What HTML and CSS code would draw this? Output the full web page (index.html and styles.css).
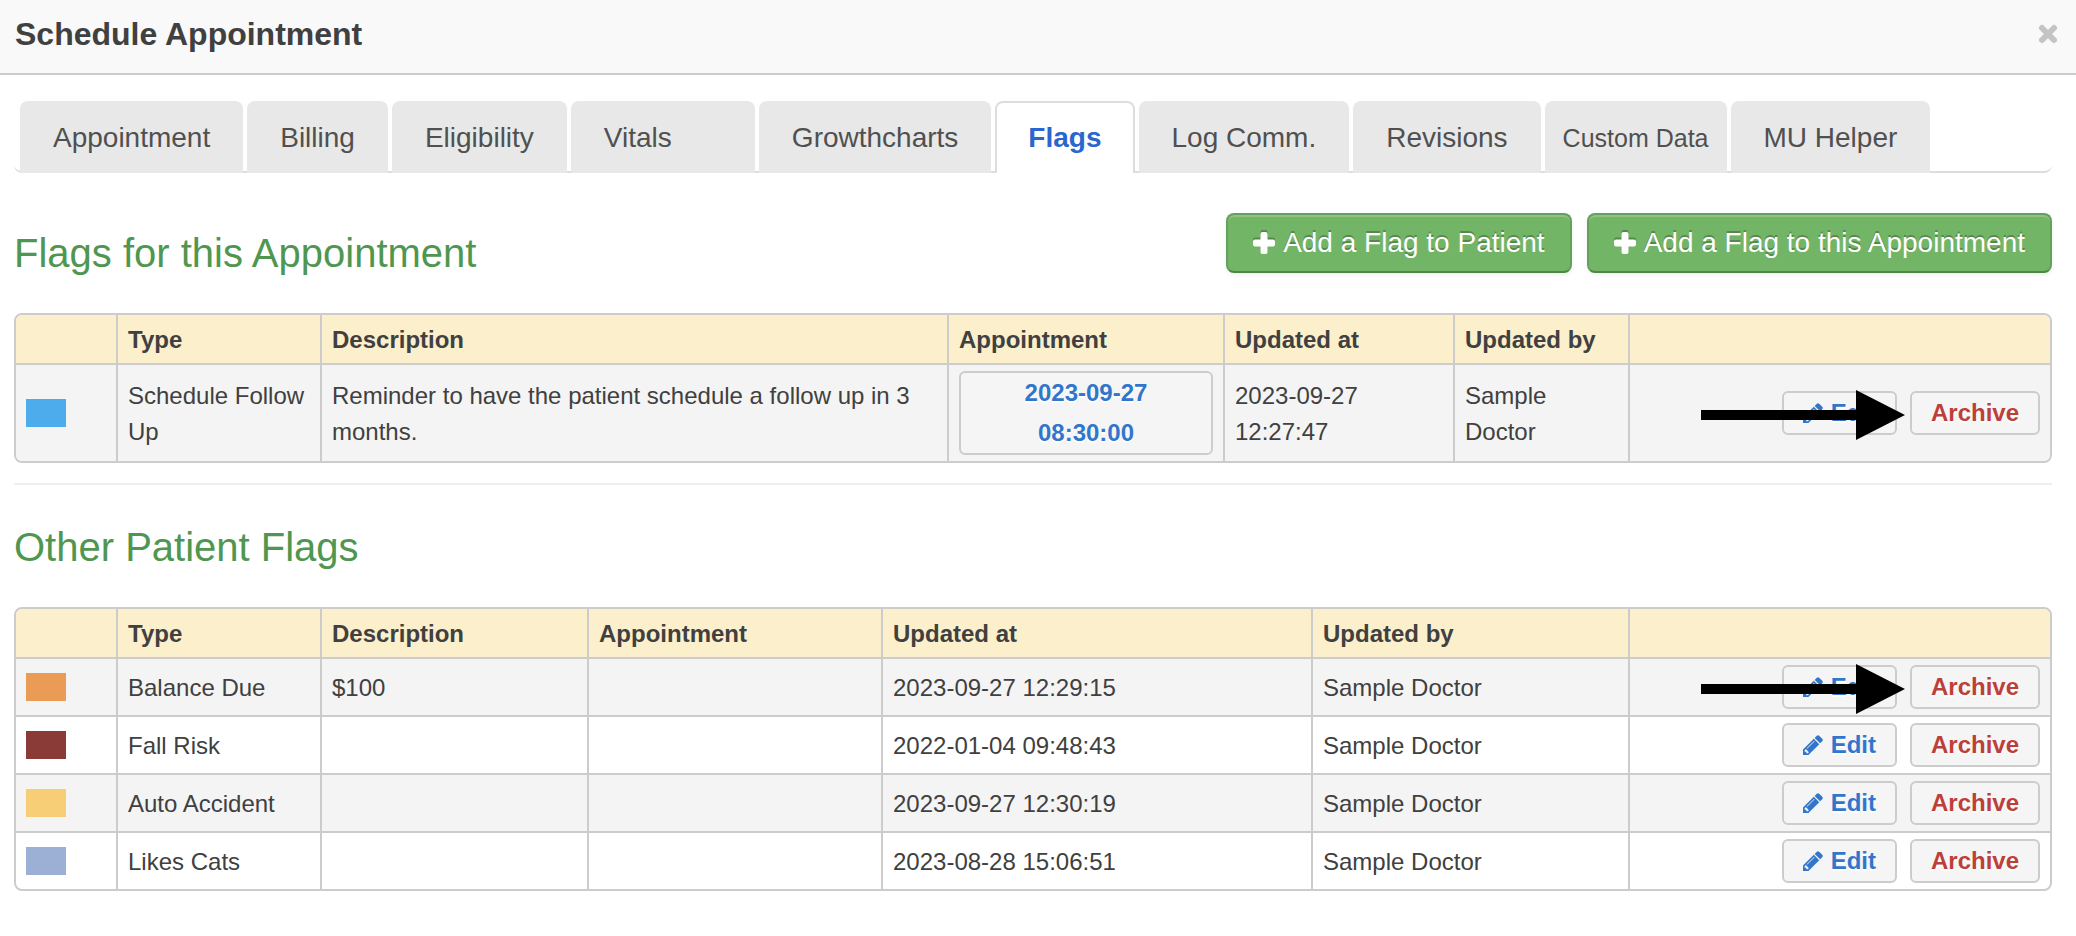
FILE: index.html
```html
<!DOCTYPE html>
<html lang="en">
<head>
<meta charset="utf-8">
<title>Schedule Appointment</title>
<link rel="stylesheet" href="styles.css">
</head>
<body>
<svg class="sprite" aria-hidden="true">
  <symbol id="plus" viewBox="0 0 22 22"><path d="M9.500 0h3a2 2 0 0 1 2 2v5.500h5.500a2 2 0 0 1 2 2v3a2 2 0 0 1-2 2h-5.500v5.500a2 2 0 0 1-2 2h-3a2 2 0 0 1-2-2v-5.500h-5.500a2 2 0 0 1-2-2v-3a2 2 0 0 1 2-2h5.500v-5.500a2 2 0 0 1 2-2z"/></symbol>
  <symbol id="pencil" viewBox="0 0 1536 1536"><path d="M363 1408l91-91-235-235-91 91v107h128v128h107zM886 480q0-22-22-22-10 0-17 7l-542 542q-7 7-7 17 0 22 22 22 10 0 17-7l542-542q7-7 7-17zM832 288l416 416-832 832H0v-416zM1515 384q0 53-37 90l-166 166-416-416 166-165q36-38 90-38 53 0 91 38l235 234q37 39 37 91z"/></symbol>
  <symbol id="arrow" viewBox="0 0 204 50"><path d="M0 20h155V0l49 25-49 25V30H0z"/></symbol>
</svg>

<header class="modal-header">
  <h1>Schedule Appointment</h1>
  <button class="close" type="button" aria-label="Close">
    <svg viewBox="0 0 20 20"><path d="M4 4l12 12M16 4l-12 12"/></svg>
  </button>
</header>

<nav class="tabs">
  <a class="tab" href="#appointment">Appointment</a>
  <a class="tab" href="#billing">Billing</a>
  <a class="tab" href="#eligibility">Eligibility</a>
  <a class="tab tab-vitals" href="#vitals">Vitals</a>
  <a class="tab" href="#growthcharts">Growthcharts</a>
  <a class="tab tab-active" href="#flags">Flags</a>
  <a class="tab" href="#log">Log Comm.</a>
  <a class="tab" href="#revisions">Revisions</a>
  <a class="tab tab-small" href="#custom">Custom Data</a>
  <a class="tab" href="#helper">MU Helper</a>
</nav>

<main>
  <section>
    <div class="section-head">
      <h2>Flags for this Appointment</h2>
      <div class="section-actions">
        <button class="btn-add" type="button"><svg class="plus"><use href="#plus"/></svg>Add a Flag to Patient</button>
        <button class="btn-add" type="button"><svg class="plus"><use href="#plus"/></svg>Add a Flag to this Appointment</button>
      </div>
    </div>
    <table class="flags">
      <colgroup><col class="w-swatch"><col class="w-type"><col><col class="w-appt"><col class="w-at"><col class="w-by"><col class="w-actions"></colgroup>
      <thead>
        <tr><th></th><th>Type</th><th>Description</th><th>Appointment</th><th>Updated at</th><th>Updated by</th><th></th></tr>
      </thead>
      <tbody>
        <tr>
          <td><span class="swatch blue"></span></td>
          <td>Schedule Follow Up</td>
          <td>Reminder to have the patient schedule a follow up in 3 months.</td>
          <td><button class="btn btn-date" type="button">2023-09-27<br>08:30:00</button></td>
          <td>2023-09-27<br>12:27:47</td>
          <td>Sample Doctor</td>
          <td><div class="actions"><button class="btn" type="button"><svg class="pencil"><use href="#pencil"/></svg>Edit</button><button class="btn btn-archive" type="button">Archive</button><svg class="arrow"><use href="#arrow"/></svg></div></td>
        </tr>
      </tbody>
    </table>
  </section>
  <hr>
  <section>
    <div class="section-head">
      <h2>Other Patient Flags</h2>
    </div>
    <table class="flags">
      <colgroup><col class="w-swatch"><col class="w-type"><col><col class="w-other-appt"><col class="w-other-at"><col class="w-other-by"><col class="w-actions"></colgroup>
      <thead>
        <tr><th></th><th>Type</th><th>Description</th><th>Appointment</th><th>Updated at</th><th>Updated by</th><th></th></tr>
      </thead>
      <tbody>
        <tr>
          <td><span class="swatch orange"></span></td><td>Balance Due</td><td>$100</td><td></td><td>2023-09-27 12:29:15</td><td>Sample Doctor</td>
          <td><div class="actions"><button class="btn" type="button"><svg class="pencil"><use href="#pencil"/></svg>Edit</button><button class="btn btn-archive" type="button">Archive</button><svg class="arrow"><use href="#arrow"/></svg></div></td>
        </tr>
        <tr>
          <td><span class="swatch maroon"></span></td><td>Fall Risk</td><td></td><td></td><td>2022-01-04 09:48:43</td><td>Sample Doctor</td>
          <td><div class="actions"><button class="btn" type="button"><svg class="pencil"><use href="#pencil"/></svg>Edit</button><button class="btn btn-archive" type="button">Archive</button></div></td>
        </tr>
        <tr>
          <td><span class="swatch yellow"></span></td><td>Auto Accident</td><td></td><td></td><td>2023-09-27 12:30:19</td><td>Sample Doctor</td>
          <td><div class="actions"><button class="btn" type="button"><svg class="pencil"><use href="#pencil"/></svg>Edit</button><button class="btn btn-archive" type="button">Archive</button></div></td>
        </tr>
        <tr>
          <td><span class="swatch slate"></span></td><td>Likes Cats</td><td></td><td></td><td>2023-08-28 15:06:51</td><td>Sample Doctor</td>
          <td><div class="actions"><button class="btn" type="button"><svg class="pencil"><use href="#pencil"/></svg>Edit</button><button class="btn btn-archive" type="button">Archive</button></div></td>
        </tr>
      </tbody>
    </table>
  </section>
</main>
</body>
</html>
```
FILE: styles.css
```css
* { box-sizing: border-box; }

body {
  margin: 0;
  background: #fff;
  color: #404040;
  font: 24px/36px "Liberation Sans", Arial, sans-serif;
}

button { font-family: inherit; cursor: pointer; }

.sprite { display: none; }

.modal-header {
  display: flex;
  align-items: center;
  justify-content: space-between;
  padding: 14px 18px 19px 15px;
  background: #f9f9f9;
  border-bottom: 2px solid #ccc;
}

h1 { margin: 0; font-size: 32px; line-height: 40px; }

.close {
  display: flex;
  padding: 0;
  border: 0;
  background: none;
}
.close svg {
  width: 20px;
  height: 20px;
  fill: none;
  stroke: #c4c4c4;
  stroke-width: 6;
  stroke-linecap: round;
}

.tabs {
  display: flex;
  gap: 4px;
  margin: 26px 24px 40px 14px;
  padding-left: 6px;
  border-bottom: 2px solid #ddd;
  border-radius: 0 0 8px 8px;
}
.tab {
  margin-bottom: -2px;
  padding: 17px 31px;
  border: 2px solid #e8e8e8;
  border-bottom: 0;
  border-radius: 8px 8px 0 0;
  background: #e8e8e8;
  color: #505050;
  font-size: 28px;
  line-height: 36px;
  text-decoration: none;
  white-space: nowrap;
}
.tab-vitals { min-width: 184px; }
.tab-small { padding: 17px 16px; font-size: 25px; }
.tab-active {
  border-color: #ddd;
  background: #fff;
  color: #2a66d0;
  font-weight: bold;
}

main { padding: 0 24px 0 14px; }

.section-head {
  display: flex;
  align-items: flex-start;
  justify-content: space-between;
  margin-bottom: 20px;
}
h2 {
  margin: 0;
  color: #4f9750;
  font-size: 40px;
  font-weight: normal;
  line-height: 80px;
}
.section-actions { display: flex; gap: 15px; }

.btn-add {
  display: flex;
  align-items: center;
  gap: 8px;
  height: 60px;
  padding: 0 25px;
  border: 2px solid #63a25a;
  border-bottom-color: #4f8747;
  border-radius: 8px;
  background: #73b566;
  box-shadow: inset 0 2px 0 rgba(255, 255, 255, .2), 0 2px 4px rgba(0, 0, 0, .06);
  color: #fff;
  font-size: 28px;
  text-shadow: 0 -2px 0 rgba(0, 0, 0, .25);
}
.plus {
  width: 22px;
  height: 22px;
  fill: #fff;
  filter: drop-shadow(0 -2px 0 rgba(0, 0, 0, .25));
}

.flags {
  width: 100%;
  table-layout: fixed;
  border: 2px solid #ccc;
  border-radius: 8px;
  border-spacing: 0;
  overflow: hidden;
}
.w-swatch { width: 100px; }
.w-type { width: 204px; }
.w-appt { width: 276px; }
.w-at { width: 230px; }
.w-by { width: 175px; }
.w-actions { width: 422px; }
.w-other-appt { width: 294px; }
.w-other-at { width: 430px; }
.w-other-by { width: 317px; }

.flags th {
  padding: 7px 10px 5px;
  border-left: 2px solid #ccc;
  background: #fcefcc;
  text-align: left;
}
.flags td {
  padding: 7px 10px 5px;
  border-top: 2px solid #ccc;
  border-left: 2px solid #ccc;
  vertical-align: middle;
}
.flags td:first-child, .flags td:has(button) { padding: 6px 10px; }
.flags th:first-child, .flags td:first-child { border-left: 0; }
.flags tbody tr:nth-child(odd) { background: #f4f4f4; }

.swatch { display: block; width: 40px; height: 28px; }
.blue { background: #4dadec; }
.orange { background: #ea9b56; }
.maroon { background: #8a3b38; }
.yellow { background: #f7cd75; }
.slate { background: #9bb0d4; }

.actions {
  position: relative;
  display: flex;
  justify-content: flex-end;
  gap: 13px;
}
.btn {
  display: flex;
  align-items: center;
  justify-content: center;
  gap: 8px;
  padding: 0 19px;
  border: 2px solid #ccc;
  border-radius: 6px;
  background: #f5f5f5;
  color: #3276cb;
  font-size: 24px;
  font-weight: bold;
  line-height: 40px;
  text-shadow: 0 2px 0 #fff;
}
.btn-date { width: 100%; }
.btn-archive { color: #bd3f39; }
.pencil { width: 20px; height: 20px; fill: #3276cb; }

.arrow {
  position: absolute;
  top: -1px;
  right: 135px;
  width: 204px;
  height: 50px;
  fill: #000;
}

hr {
  margin: 20px 0 22px;
  border: 0;
  border-top: 2px solid #eee;
}
```
